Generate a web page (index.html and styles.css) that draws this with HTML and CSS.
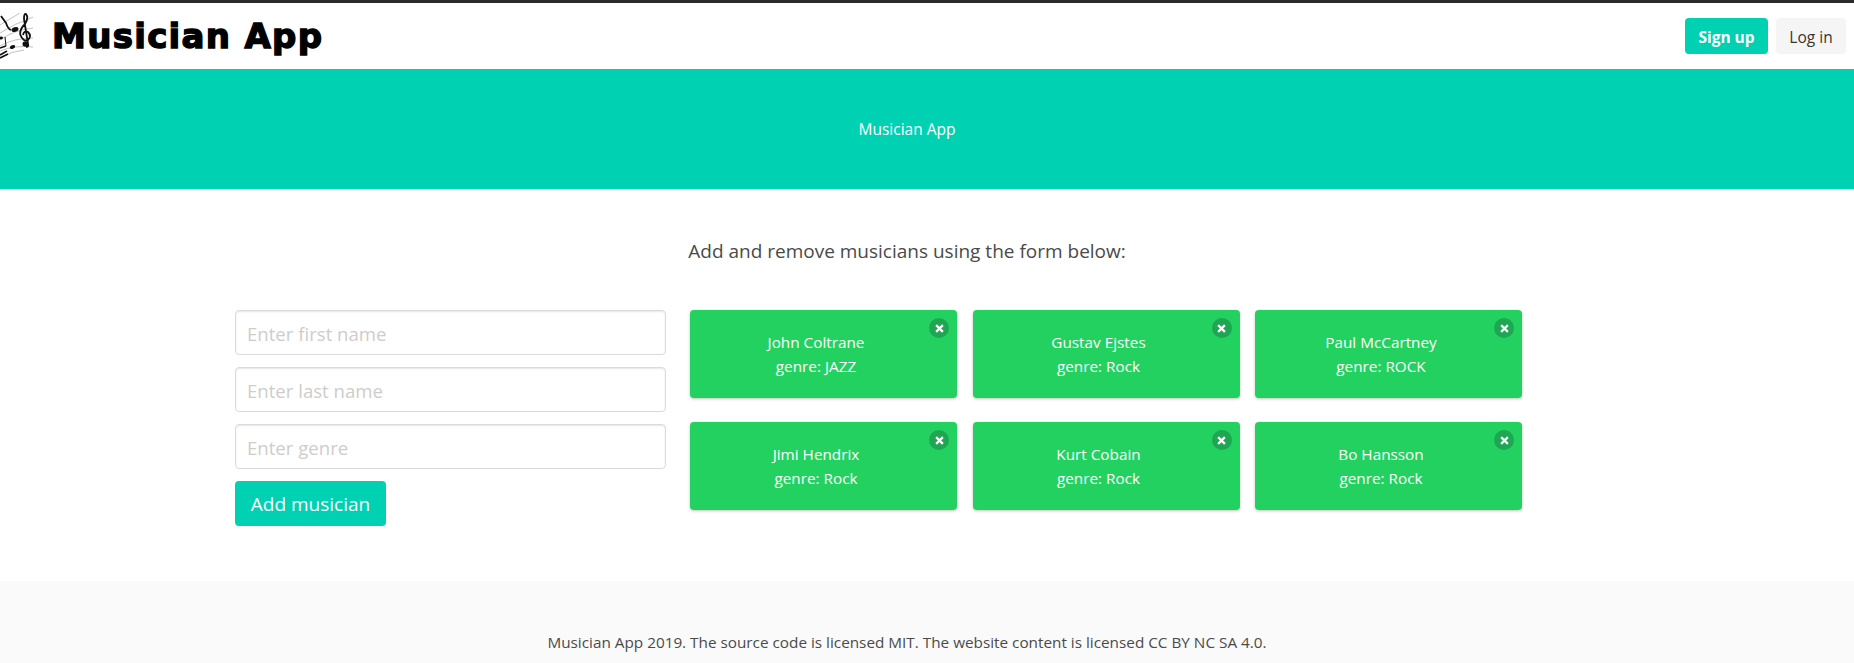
FILE: index.html
```html
<!DOCTYPE html>
<html lang="en">
<head>
<meta charset="utf-8">
<title>Musician App</title>
<link rel="stylesheet" href="styles.css">
</head>
<body>
<nav class="navbar">
  <svg class="logo-art" width="34" height="48" viewBox="0 0 34 48" fill="none" aria-hidden="true">
    <g stroke="#a8a8a8" stroke-width="0.7">
      <path d="M0 12 Q10 6 20 0"/>
      <path d="M0 20 Q14 11 33 4"/>
      <path d="M0 27 Q14 17 33 15"/>
      <path d="M0 33 Q14 25 33 25"/>
      <path d="M0 38 Q14 32 33 34"/>
      <path d="M0 45 Q12 38 24 37"/>
    </g>
    <g fill="#111">
      <ellipse cx="15" cy="16.500" rx="3.600" ry="2.300" transform="rotate(-20 15 16.500)"/>
      <ellipse cx="12.500" cy="34" rx="2.800" ry="1.800" transform="rotate(-20 12.500 34)"/>
      <ellipse cx="25.500" cy="31" rx="3" ry="2.800"/>
      <ellipse cx="1" cy="25" rx="2" ry="1.400"/>
    </g>
    <g stroke="#111" fill="none">
      <path d="M1 3 L6 10 Q8 16 11 17" stroke-width="1.800"/>
      <path d="M5 24 L6 33" stroke-width="1"/>
      <path d="M0 35 L6 33" stroke-width="1.400"/>
      <path d="M0 42 L7 38 M0 45 L8 41" stroke-width="1.600"/>
      <path d="M28 31 Q29 34 26 34 M28 31 L24 6 Q24 0 26 1 Q29 5 25 11 Q19 17 20.500 22 Q23 29 28 27 Q32 23 28 19 Q24 17 23 22" stroke-width="1.800"/>
    </g>
  </svg>
  <span class="brand">Musician App</span>
  <div class="nav-actions">
    <a class="btn btn-signup">Sign up</a>
    <a class="btn btn-login">Log in</a>
  </div>
</nav>
<header class="hero"><p class="hero-text">Musician App</p></header>
<main class="main">
  <p class="intro">Add and remove musicians using the form below:</p>
  <div class="columns">
    <form class="form">
      <input class="input" type="text" placeholder="Enter first name">
      <input class="input" type="text" placeholder="Enter last name">
      <input class="input" type="text" placeholder="Enter genre">
      <button class="add" type="button">Add musician</button>
    </form>
    <section class="cards">
      <div class="card"><span class="close"><svg width="9" height="9" viewBox="0 0 8 8"><path d="M1 1L7 7M7 1L1 7" stroke="#fff" stroke-width="2"/></svg></span><p>John Coltrane</p><p>genre: JAZZ</p></div>
      <div class="card"><span class="close"><svg width="9" height="9" viewBox="0 0 8 8"><path d="M1 1L7 7M7 1L1 7" stroke="#fff" stroke-width="2"/></svg></span><p>Gustav Ejstes</p><p>genre: Rock</p></div>
      <div class="card"><span class="close"><svg width="9" height="9" viewBox="0 0 8 8"><path d="M1 1L7 7M7 1L1 7" stroke="#fff" stroke-width="2"/></svg></span><p>Paul McCartney</p><p>genre: ROCK</p></div>
      <div class="card"><span class="close"><svg width="9" height="9" viewBox="0 0 8 8"><path d="M1 1L7 7M7 1L1 7" stroke="#fff" stroke-width="2"/></svg></span><p>Jimi Hendrix</p><p>genre: Rock</p></div>
      <div class="card"><span class="close"><svg width="9" height="9" viewBox="0 0 8 8"><path d="M1 1L7 7M7 1L1 7" stroke="#fff" stroke-width="2"/></svg></span><p>Kurt Cobain</p><p>genre: Rock</p></div>
      <div class="card"><span class="close"><svg width="9" height="9" viewBox="0 0 8 8"><path d="M1 1L7 7M7 1L1 7" stroke="#fff" stroke-width="2"/></svg></span><p>Bo Hansson</p><p>genre: Rock</p></div>
    </section>
  </div>
</main>
<footer class="footer"><p>Musician App 2019. The source code is licensed MIT. The website content is licensed CC BY NC SA 4.0.</p></footer>
</body>
</html>
```

FILE: styles.css
```css
* { box-sizing: border-box; }
html, body { margin: 0; height: 663px; overflow: hidden; }
body { font-family: "Open Sans", "Noto Sans", sans-serif; color: #4a4a4a; background: #fff; }
p { margin: 0; }

.navbar { height: 69px; border-top: 3px solid #2b2b2b; display: flex; align-items: center; background: #fff; }
.logo-art { margin-top: 2px; flex: none; }
.brand { margin-left: 18px; font-family: "DejaVu Sans", sans-serif; font-weight: 700; font-size: 34px; letter-spacing: 1.300px; line-height: 1; color: #000; -webkit-text-stroke: 1.400px #000; white-space: nowrap; }
.nav-actions { margin-left: auto; margin-right: 8px; display: flex; gap: 8px; }
.btn { height: 36px; border-radius: 4px; display: flex; align-items: center; justify-content: center; font-size: 15.500px; padding-top: 1px; }
.btn-signup { width: 83px; background: #00d1b2; color: #fff; font-weight: 700; }
.btn-login { width: 70px; background: #f5f5f5; color: #363636; }

.hero { height: 120px; background: #00d1b2; display: flex; align-items: center; justify-content: center; padding-right: 40px; }
.hero-text { color: #fff; font-size: 15.500px; }

.main { height: 392px; }
.intro { padding-top: 48px; padding-right: 40px; text-align: center; font-size: 19px; line-height: 28px; }
.columns { margin-top: 45px; padding-left: 235px; display: flex; gap: 24px; }

.form { width: 431px; display: flex; flex-direction: column; align-items: flex-start; gap: 12px; }
.input { width: 100%; height: 45px; border: 1px solid #dbdbdb; border-radius: 4px; box-shadow: inset 0 1px 2px rgba(10,10,10,.1); padding: 1px 11px 0; font-family: inherit; font-size: 18.600px; color: #363636; background: #fff; }
.input::placeholder { color: #cfcccc; opacity: 1; }
.add { width: 151px; height: 45px; border: 0; border-radius: 4px; background: #00d1b2; color: #fff; font-family: inherit; font-size: 19px; padding: 1px 0 0; }

.cards { display: grid; grid-template-columns: repeat(3, 267px); grid-auto-rows: 88px; column-gap: 15.500px; row-gap: 24px; }
.card { position: relative; background: #23d160; color: #fff; border-radius: 4px; box-shadow: 0 1px 3px rgba(10,10,10,.25); display: flex; flex-direction: column; align-items: center; justify-content: center; font-size: 15.300px; line-height: 24px; padding-right: 15px; }
.close { position: absolute; top: 8px; right: 8px; width: 20px; height: 20px; border-radius: 50%; background: #1fa652; display: flex; align-items: center; justify-content: center; }

.footer { height: 82px; background: #fafafa; padding: 49px 40px 0 0; text-align: center; font-size: 15.300px; line-height: 24px; }
```
